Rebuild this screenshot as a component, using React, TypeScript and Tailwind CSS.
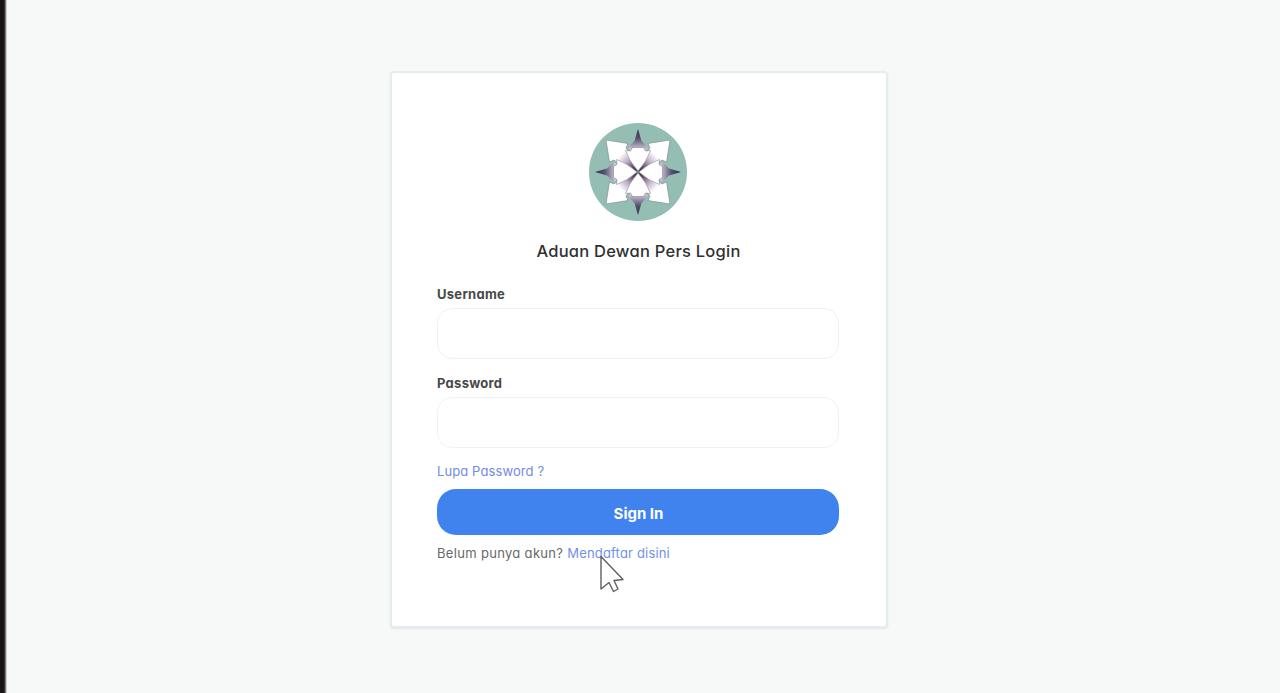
const directions = [0, 90, 180, 270];

function Logo() {
  return (
    <svg viewBox="-49 -49 98 98" className="h-[98px] w-[98px]" role="img" aria-label="Dewan Pers">
      <defs>
        <linearGradient id="spike" x1="0" y1="-43" x2="0" y2="-22" gradientUnits="userSpaceOnUse">
          <stop offset="0" stopColor="#28304a" />
          <stop offset="0.45" stopColor="#57506f" />
          <stop offset="1" stopColor="#d8cfe0" />
        </linearGradient>
        <radialGradient id="shaft" cx="0" cy="0" r="30" gradientUnits="userSpaceOnUse">
          <stop offset="0" stopColor="#241c35" />
          <stop offset="0.22" stopColor="#5f4b69" />
          <stop offset="0.5" stopColor="#bfaec6" />
          <stop offset="0.82" stopColor="#ffffff" />
        </radialGradient>
      </defs>
      <circle r="49" fill="#94bdb3" />
      {directions.map((deg) => (
        <path key={deg} transform={`rotate(${deg})`} d="M0-43 3.5-31 10-24 0-12-10-24-3.5-31Z" fill="url(#spike)" />
      ))}
      {directions.map((deg) => (
        <path
          key={deg}
          transform={`rotate(${deg})`}
          d="M0 0-9-20-12-24-10-28.5-32-32-28.5-10-24-12-20-9Z"
          fill="url(#shaft)"
          stroke="#7b8488"
          strokeWidth="0.6"
        />
      ))}
      {directions.map((deg) => (
        <path
          key={deg}
          transform={`rotate(${deg})`}
          d="M0-1Q-9-11-12.5-21.5L-7.5-21-5.5-24.5H5.5L7.5-21 12.5-21.5Q9-11 0-1Z"
          fill="#fff"
          stroke="#79717f"
          strokeWidth="0.5"
        />
      ))}
    </svg>
  );
}

function Field({ label, type, name }: { label: string; type: string; name: string }) {
  return (
    <label className="block h-[88.5px]">
      <span className="block h-[23px] text-[13px] leading-[19px] font-bold tracking-[0.28px] text-[#484848]">{label}</span>
      <input
        type={type}
        name={name}
        className="block h-[51px] w-full rounded-[15px] border border-[#f0f1f2] bg-white px-4 outline-none"
      />
    </label>
  );
}

function Cursor() {
  return (
    <svg viewBox="0 0 26 38" className="pointer-events-none absolute top-[555px] left-[599px] h-[38px] w-[26px]">
      <path
        d="M2 1.5V34L10 27.5 14.5 36.5 19 34 15 25.5 24 24.5Z"
        fill="#fff"
        stroke="#606060"
        strokeWidth="1.4"
        strokeLinejoin="round"
      />
    </svg>
  );
}

export default function App() {
  return (
    <main className="relative flex h-[693px] w-full overflow-hidden bg-[#f7f8f8] font-['Inter','Noto_Sans',sans-serif] [font-feature-settings:'cv11','ss03']">
      <div className="w-[7px] shrink-0 bg-linear-to-r from-[#171614] from-[58%] to-[#f8f8f8]" />
      <div className="mt-[71px] ml-[383px] flex h-[557px] w-[498px] flex-col rounded-[4px] border-2 border-[#e4ecef] bg-white pt-[50px] pr-[47px] pl-[45px] shadow-[0_1px_2px_#dde7e9]">
        <div className="flex justify-center">
          <Logo />
        </div>
        <h1 className="mt-[17px] h-[47px] pl-px text-center text-[16.5px] leading-[27px] font-medium tracking-[0.24px] whitespace-nowrap text-[#303030]">
          Aduan Dewan Pers Login
        </h1>
        <form className="flex flex-col" onSubmit={(e) => e.preventDefault()}>
          <Field label="Username" type="text" name="username" />
          <Field label="Password" type="password" name="password" />
          <a href="#" className="-mt-px h-[28px] self-start text-[13px] leading-[21px] tracking-[0.1px] text-[#718cdd]">
            Lupa Password ?
          </a>
          <button
            type="submit"
            className="h-[46px] w-full rounded-[19px] bg-[#4083ef] pt-[5px] pl-px text-[15px] font-bold text-white"
          >
            Sign In
          </button>
          <p className="mt-[8px] text-[13px] leading-[21px] tracking-[0.32px] whitespace-nowrap text-[#686868]">
            Belum punya akun?{" "}
            <a href="#" className="tracking-[0.17px] text-[#6f91e6]">
              Mendaftar disini
            </a>
          </p>
        </form>
      </div>
      <Cursor />
    </main>
  );
}
